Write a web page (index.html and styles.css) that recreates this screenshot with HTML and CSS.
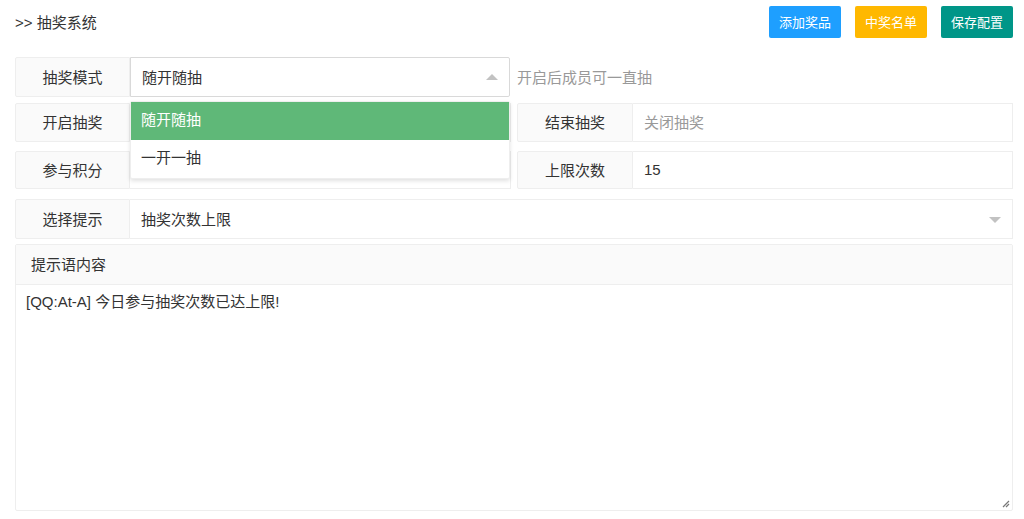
FILE: index.html
```html
<!DOCTYPE html>
<html lang="zh">
<head>
<meta charset="utf-8">
<title>抽奖系统</title>
<link rel="stylesheet" href="styles.css">
</head>
<body>
<div class="page">
  <div class="topbar">
    <div class="title">&gt;&gt; 抽奖系统</div>
    <div class="btns">
      <button class="btn btn-blue">添加奖品</button>
      <button class="btn btn-yellow">中奖名单</button>
      <button class="btn btn-green">保存配置</button>
    </div>
  </div>

  <div class="row row1">
    <div class="field field-mode">
      <label class="label">抽奖模式</label>
      <div class="select select-open">
        <span class="value">随开随抽</span>
        <span class="arrow arrow-up"></span>
        <div class="dropdown">
          <div class="opt opt-sel">随开随抽</div>
          <div class="opt">一开一抽</div>
        </div>
      </div>
    </div>
    <div class="hint">开启后成员可一直抽</div>
  </div>

  <div class="row row2">
    <div class="field half">
      <label class="label">开启抽奖</label>
      <div class="input"></div>
    </div>
    <div class="field half">
      <label class="label">结束抽奖</label>
      <div class="input placeholder">关闭抽奖</div>
    </div>
  </div>

  <div class="row row3">
    <div class="field half">
      <label class="label">参与积分</label>
      <div class="input"></div>
    </div>
    <div class="field half">
      <label class="label">上限次数</label>
      <div class="input">15</div>
    </div>
  </div>

  <div class="row row4">
    <div class="field full">
      <label class="label">选择提示</label>
      <div class="select">
        <span class="value">抽奖次数上限</span>
        <span class="arrow arrow-down"></span>
      </div>
    </div>
  </div>

  <div class="pane">
    <div class="pane-head">提示语内容</div>
    <div class="pane-body">[QQ:At-A] 今日参与抽奖次数已达上限!
      <svg class="grip" width="9" height="9" viewBox="0 0 9 9"><path d="M8 2 L2 8 M8 5 L5 8" stroke="#777" stroke-width="1.2" fill="none"/></svg>
    </div>
  </div>
</div>
</body>
</html>
```

FILE: styles.css
```css
* { box-sizing: border-box; }
html, body {
  margin: 0;
  padding: 0;
  background: #fff;
  font-family: "Liberation Sans", "Noto Sans CJK SC", sans-serif;
  color: #333;
}
.page {
  width: 998px;
  margin-left: 15px;
}
.topbar {
  display: flex;
  justify-content: space-between;
  align-items: flex-start;
  height: 57px;
  padding-top: 6px;
}
.title {
  font-size: 15px;
  line-height: 20px;
  margin-top: 7px;
  color: #333;
}
.btns {
  display: flex;
  gap: 14px;
}
.btn {
  height: 32px;
  width: 72px;
  border: none;
  border-radius: 2px;
  color: #fff;
  font-family: inherit;
  font-size: 13px;
  padding: 0 0 2px;
}
.btn-blue { background: #1e9fff; }
.btn-yellow { background: #ffb800; }
.btn-green { background: #009688; }

.row {
  display: flex;
  align-items: center;
  height: 40px;
}
.row1 { margin-bottom: 6px; }
.row2 { margin-bottom: 9px; height: 39px; }
.row3 { margin-bottom: 10px; height: 38px; }
.row4 { margin-bottom: 5px; }

.field {
  display: flex;
  height: 100%;
}
.field-mode { width: 495px; }
.half { width: 496px; }
.half + .half { margin-left: 6px; }
.half + .half .label { flex-basis: 116px; }
.full { width: 998px; }

.label {
  flex: 0 0 115px;
  background: #fafafa;
  border: 1px solid #eee;
  border-radius: 2px 0 0 2px;
  text-align: center;
  font-size: 15px;
  display: flex;
  align-items: center;
  justify-content: center;
  padding-bottom: 2px;
  color: #333;
}
.input, .select {
  flex: 1;
  border: 1px solid #eee;
  border-left: none;
  display: flex;
  align-items: center;
  padding-left: 11px;
  padding-bottom: 2px;
  font-size: 15px;
  color: #333;
  background: #fff;
  position: relative;
}
.select-open {
  border: 1px solid #d9d9d9;
  border-radius: 0 2px 2px 0;
}
.placeholder { color: #999; }
.hint {
  margin-left: 7px;
  padding-bottom: 2px;
  font-size: 15px;
  color: #999;
}
.arrow {
  position: absolute;
  right: 11px;
  width: 0;
  height: 0;
  border-left: 6px solid transparent;
  border-right: 6px solid transparent;
}
.arrow-up { border-bottom: 6px solid #c2c2c2; top: 16px; }
.arrow-down { border-top: 6px solid #c2c2c2; top: 17px; right: 11px; }

.dropdown {
  position: absolute;
  left: -1px;
  right: -1px;
  top: 43px;
  background: #fff;
  border: 1px solid #eee;
  box-shadow: 0 2px 4px rgba(0,0,0,.12);
  border-radius: 2px;
  z-index: 10;
}
.opt {
  height: 38px;
  line-height: 35px;
  padding-left: 10px;
  font-size: 15px;
  color: #333;
}
.opt-sel {
  background: #5fb878;
  color: #fff;
}

.pane {
  border: 1px solid #eee;
  border-radius: 2px;
}
.pane-head {
  height: 40px;
  background: #fafafa;
  border-bottom: 1px solid #eee;
  padding-left: 15px;
  padding-bottom: 2px;
  display: flex;
  align-items: center;
  font-size: 15px;
}
.pane-body {
  position: relative;
  height: 225px;
  padding: 6px 10px;
  font-size: 15px;
  line-height: 22px;
  color: #333;
}
.grip {
  position: absolute;
  right: 2px;
  bottom: 2px;
}
```
